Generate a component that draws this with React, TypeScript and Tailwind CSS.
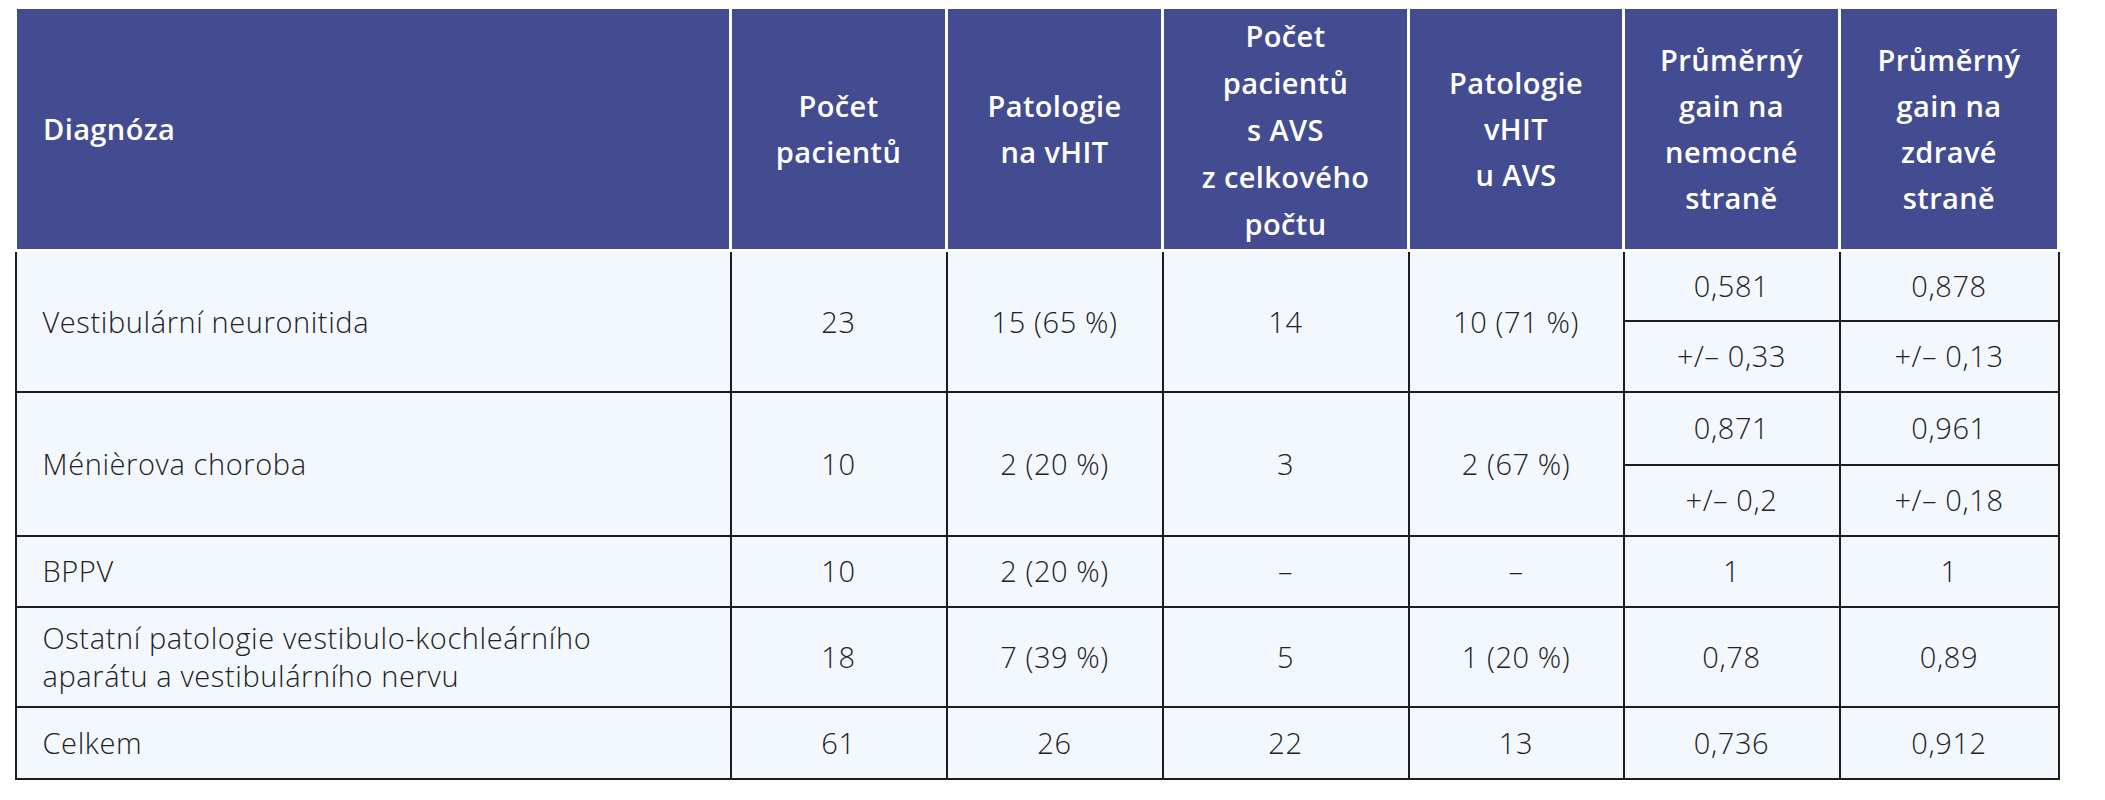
import React from 'react'

const font = { fontFamily: '"Open Sans", "Noto Sans", sans-serif' }

const head = [
  { lines: ['Diagnóza'], left: true },
  { lines: ['Počet', 'pacientů'] },
  { lines: ['Patologie', 'na vHIT'] },
  { lines: ['Počet', 'pacientů', 's AVS', 'z celkového', 'počtu'], tall: true },
  { lines: ['Patologie', 'vHIT', 'u AVS'] },
  { lines: ['Průměrný', 'gain na', 'nemocné', 'straně'] },
  { lines: ['Průměrný', 'gain na', 'zdravé', 'straně'] },
]

const td = 'border-2 border-[#1d1d1d] text-center align-middle'
const tdLeft = 'border-2 border-[#1d1d1d] text-left pl-[26px] align-middle'

export default function App() {
  return (
    <div className="min-h-[800px] bg-white pt-[6px] pl-[14px]" style={font}>
      <table className="border-collapse table-fixed w-[2043px] text-[29px] font-light text-[#222222] tracking-[0.6px]">
        <colgroup>
          <col className="w-[715px]" />
          <col className="w-[216px]" />
          <col className="w-[216px]" />
          <col className="w-[246px]" />
          <col className="w-[215px]" />
          <col className="w-[216px]" />
          <col className="w-[219px]" />
        </colgroup>
        <thead>
          <tr className="h-[243px]">
            {head.map((h, i) => (
              <th
                key={i}
                className={
                  'border-[3px] border-white bg-[#434c91] text-white font-semibold text-[29px] tracking-[0.4px] align-middle ' +
                  (h.tall ? 'leading-[47px] ' : 'leading-[46px] ') +
                  (h.left ? 'text-left pl-[26px]' : 'text-center')
                }
              >
                {h.lines.map((l, j) => (
                  <div key={j}>{l}</div>
                ))}
              </th>
            ))}
          </tr>
        </thead>
        <tbody className="bg-[#f3f8fe]">
          <tr className="h-[70px]">
            <td rowSpan={2} className={tdLeft}>Vestibulární neuronitida</td>
            <td rowSpan={2} className={td}>23</td>
            <td rowSpan={2} className={td}>15 (65 %)</td>
            <td rowSpan={2} className={td}>14</td>
            <td rowSpan={2} className={td}>10 (71 %)</td>
            <td className={td}>0,581</td>
            <td className={td}>0,878</td>
          </tr>
          <tr className="h-[71px]">
            <td className={td}>+/– 0,33</td>
            <td className={td}>+/– 0,13</td>
          </tr>
          <tr className="h-[73px]">
            <td rowSpan={2} className={tdLeft}>Ménièrova choroba</td>
            <td rowSpan={2} className={td}>10</td>
            <td rowSpan={2} className={td}>2 (20 %)</td>
            <td rowSpan={2} className={td}>3</td>
            <td rowSpan={2} className={td}>2 (67 %)</td>
            <td className={td}>0,871</td>
            <td className={td}>0,961</td>
          </tr>
          <tr className="h-[71px]">
            <td className={td}>+/– 0,2</td>
            <td className={td}>+/– 0,18</td>
          </tr>
          <tr className="h-[71px]">
            <td className={tdLeft}>BPPV</td>
            <td className={td}>10</td>
            <td className={td}>2 (20 %)</td>
            <td className={td}>–</td>
            <td className={td}>–</td>
            <td className={td}>1</td>
            <td className={td}>1</td>
          </tr>
          <tr className="h-[100px]">
            <td className={tdLeft + ' leading-[38px]'}>
              Ostatní patologie vestibulo-kochleárního
              <br />
              aparátu a vestibulárního nervu
            </td>
            <td className={td}>18</td>
            <td className={td}>7 (39 %)</td>
            <td className={td}>5</td>
            <td className={td}>1 (20 %)</td>
            <td className={td}>0,78</td>
            <td className={td}>0,89</td>
          </tr>
          <tr className="h-[72px]">
            <td className={tdLeft}>Celkem</td>
            <td className={td}>61</td>
            <td className={td}>26</td>
            <td className={td}>22</td>
            <td className={td}>13</td>
            <td className={td}>0,736</td>
            <td className={td}>0,912</td>
          </tr>
        </tbody>
      </table>
    </div>
  )
}
